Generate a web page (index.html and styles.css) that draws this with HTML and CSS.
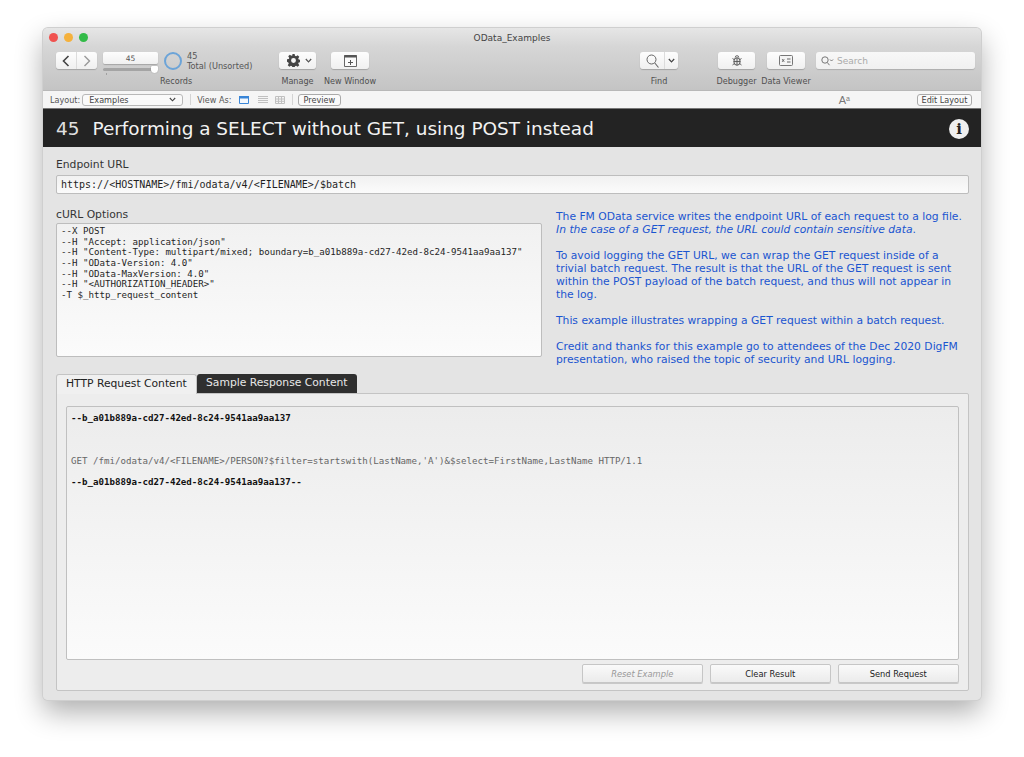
FILE: index.html
```
<!DOCTYPE html>
<html lang="en">
<head>
<meta charset="utf-8">
<title>OData_Examples</title>
<link rel="stylesheet" href="styles.css">
</head>
<body>
<div class="window">
  <header class="chrome">
    <div class="titlebar">
      <div class="lights"><i class="light red"></i><i class="light yellow"></i><i class="light green"></i></div>
      <div class="wintitle">OData_Examples</div>
    </div>
    <div class="toolbar">
      <div class="tool nav-tool">
        <div class="btn nav">
          <span class="seg"><svg width="8" height="12" viewBox="0 0 8 12"><path d="M6.500 1 1.500 6l5 5" fill="none" stroke="#444" stroke-width="1.600"/></svg></span>
          <span class="seg seg-off"><svg width="8" height="12" viewBox="0 0 8 12"><path d="M1.500 1l5 5-5 5" fill="none" stroke="#999" stroke-width="1.400"/></svg></span>
        </div>
      </div>
      <div class="tool records-tool">
        <div class="recfield">45</div>
        <div class="slider"><i class="thumb"></i><i class="tick"></i></div>
        <div class="tlabel reclabel">Records</div>
      </div>
      <div class="ring"></div>
      <div class="counts"><div>45</div><div>Total (Unsorted)</div></div>
      <div class="tool manage-tool">
        <div class="btn iconbtn gearbtn">
          <svg width="13" height="13" viewBox="0 0 16 16"><path fill="#444" fill-rule="evenodd" d="M6.600 0h2.800l.4 2.200 1.400.6 1.900-1.300 2 2-1.300 1.900.6 1.400 2.200.4v2.800l-2.200.4-.6 1.400 1.300 1.900-2 2-1.900-1.300-1.400.6-.4 2.200H6.600l-.4-2.200-1.400-.6-1.900 1.300-2-2 1.300-1.900-.6-1.400L0 9.400V6.600l2.200-.4.600-1.400L1.500 2.900l2-2 1.900 1.300 1.400-.6zM8 5a3 3 0 1 0 0 6 3 3 0 0 0 0-6z"/></svg>
          <svg width="7" height="5" viewBox="0 0 7 5"><path d="M.8 1 3.500 3.800 6.200 1" fill="none" stroke="#555" stroke-width="1.200"/></svg>
        </div>
        <div class="tlabel">Manage</div>
      </div>
      <div class="tool window-tool">
        <div class="btn iconbtn">
          <svg width="13" height="12" viewBox="0 0 13 12"><path d="M.5.5h12v11H.5z" fill="#fafafa" stroke="#666"/><path d="M.5 0h12v2.500H.5z" fill="#555"/><path d="M6.500 5v5M4 7.500h5" stroke="#555" fill="none"/></svg>
        </div>
        <div class="tlabel">New Window</div>
      </div>
      <div class="spring"></div>
      <div class="tool find-tool">
        <div class="btn nav">
          <span class="seg seg-find"><svg width="13" height="14" viewBox="0 0 13 14"><circle cx="5.500" cy="5.500" r="4.500" fill="none" stroke="#666"/><path d="M8.800 9 12.500 13.500" stroke="#666" stroke-width="1.100"/></svg></span>
          <span class="seg seg-drop"><svg width="7" height="5" viewBox="0 0 7 5"><path d="M.8 1 3.500 3.800 6.200 1" fill="none" stroke="#444" stroke-width="1.200"/></svg></span>
        </div>
        <div class="tlabel">Find</div>
      </div>
      <div class="tool debug-tool">
        <div class="btn iconbtn">
          <svg width="10" height="11" viewBox="0 0 10 11"><ellipse cx="5" cy="6.500" rx="3.200" ry="3.800" fill="#e4e4e4" stroke="#555"/><path d="M3.200 2.500a1.800 1.800 0 0 1 3.600 0M5 3v7M1.800 6.500h6.400M.5 3.500l1.500 1M9.500 3.500 8 4.500M.5 10 2 8.800M9.500 10 8 8.800" fill="none" stroke="#555" stroke-width=".9"/></svg>
        </div>
        <div class="tlabel">Debugger</div>
      </div>
      <div class="tool viewer-tool">
        <div class="btn iconbtn">
          <svg width="14" height="11" viewBox="0 0 14 11"><rect x=".5" y=".5" width="13" height="10" rx="1" fill="#f4f4f4" stroke="#777"/><path d="M3.200 4.200l2 2.600M5.200 4.200l-2 2.600M8 4h3.500M8 7h3.500" stroke="#666" fill="none"/></svg>
        </div>
        <div class="tlabel">Data Viewer</div>
      </div>
      <div class="search">
        <svg width="13" height="10" viewBox="0 0 13 10"><circle cx="4" cy="4" r="3.200" fill="none" stroke="#777"/><path d="M6.300 6.500 8.500 9.200" stroke="#777"/><path d="M9 3.500l1.500 1.500L12 3.500" stroke="#777" fill="none"/></svg>
        <span>Search</span>
      </div>
    </div>
  </header>

  <nav class="layoutbar">
    <span class="lb-label">Layout:</span>
    <span class="select">Examples<svg width="7" height="5" viewBox="0 0 7 5"><path d="M.8 1 3.500 3.800 6.200 1" fill="none" stroke="#444" stroke-width="1.100"/></svg></span>
    <i class="sep"></i>
    <span class="lb-label">View As:</span>
    <svg class="view view-form" width="10" height="8" viewBox="0 0 10 8"><path d="M.5.5h9v7h-9z" fill="#f4f8fd" stroke="#3a86d8"/><path d="M0 0h10v2.500H0z" fill="#3a86d8"/></svg>
    <svg class="view view-list" width="10" height="7" viewBox="0 0 10 7"><path d="M0 .5h10M0 2.500h10M0 4.500h10M0 6.500h10" stroke="#c0c0c0"/></svg>
    <svg class="view view-table" width="10" height="8" viewBox="0 0 10 8"><path d="M.5.5h9v7h-9zM.5 3h9M.5 5.300h9M3.500.5v7M6.500 .5v7" fill="none" stroke="#c0c0c0"/></svg>
    <i class="sep sep-right"></i>
    <span class="pill">Preview</span>
    <span class="spring"></span>
    <span class="aa">A<sup>a</sup></span>
    <span class="pill edit">Edit Layout</span>
  </nav>

  <div class="banner">
    <div class="banner-title"><span class="num">45</span>Performing a SELECT without GET, using POST instead</div>
    <div class="info">i</div>
  </div>

  <main class="content">
    <div class="flabel">Endpoint URL</div>
    <div class="field url">https://&lt;HOSTNAME&gt;/fmi/odata/v4/&lt;FILENAME&gt;/$batch</div>
    <div class="columns">
      <section class="curl">
        <div class="flabel">cURL Options</div>
        <pre class="field options">--X POST
--H "Accept: application/json"
--H "Content-Type: multipart/mixed; boundary=b_a01b889a-cd27-42ed-8c24-9541aa9aa137"
--H "OData-Version: 4.0"
--H "OData-MaxVersion: 4.0"
--H "&lt;AUTHORIZATION_HEADER&gt;"
-T $_http_request_content</pre>
      </section>
      <section class="notes">
        <p>The FM OData service writes the endpoint URL of each request to a log file.<br><em>In the case of a GET request, the URL could contain sensitive data</em>.</p>
        <p>To avoid logging the GET URL, we can wrap the GET request inside of a trivial batch request. The result is that the URL of the GET request is sent within the POST payload of the batch request, and thus will not appear in the log.</p>
        <p>This example illustrates wrapping a GET request within a batch request.</p>
        <p>Credit and thanks for this example go to attendees of the Dec 2020 DigFM presentation, who raised the topic of security and URL logging.</p>
      </section>
    </div>
    <div class="tabs">
      <div class="tab active">HTTP Request Content</div>
      <div class="tab dark">Sample Response Content</div>
    </div>
    <div class="panel">
      <div class="result">
        <div class="bold">--b_a01b889a-cd27-42ed-8c24-9541aa9aa137</div>
        <div class="get">GET /fmi/odata/v4/&lt;FILENAME&gt;/PERSON?$filter=startswith(LastName,'A')&amp;$select=FirstName,LastName HTTP/1.1</div>
        <div class="bold end">--b_a01b889a-cd27-42ed-8c24-9541aa9aa137--</div>
      </div>
      <div class="actions">
        <button class="action disabled">Reset Example</button>
        <button class="action">Clear Result</button>
        <button class="action">Send Request</button>
      </div>
    </div>
  </main>
</div>
</body>
</html>
```

FILE: styles.css
```
* { box-sizing: border-box; }
html, body { margin: 0; height: 757px; background: #fff; overflow: hidden; }
body { padding: 28px 43px 57px; font-family: "DejaVu Sans", sans-serif; color: #333; }

.window {
  width: 938px; height: 672px;
  display: flex; flex-direction: column;
  border-radius: 5px; overflow: hidden;
  background: #e4e4e4;
  box-shadow: 0 0 0 1px #cfcfcf, 0 12px 28px rgba(0,0,0,.32);
}

.chrome { height: 63px; flex: none; background: linear-gradient(#e6e6e6, #d6d6d6 30%, #c4c4c4); border-bottom: 1px solid #b8b8b8; }
.titlebar { height: 24px; display: flex; align-items: center; position: relative; }
.lights { display: flex; gap: 6.300px; padding-left: 5.500px; margin-top: -5px; }
.light { width: 9px; height: 9px; border-radius: 50%; }
.red { background: #f0524f; }
.yellow { background: #f5b13c; }
.green { background: #33bb48; }
.wintitle { position: absolute; left: 0; right: 0; top: 5px; text-align: center; font-size: 9px; line-height: 11px; color: #444; }

.toolbar { display: flex; align-items: flex-start; padding-left: 13px; height: 38px; }
.tool { display: flex; flex-direction: column; align-items: center; }
.tlabel { font-size: 8.100px; line-height: 10px; color: #4f4f4f; margin-top: 7px; white-space: nowrap; }
.btn { height: 17px; background: linear-gradient(#fdfdfd, #f0f0f0); border-radius: 3px; box-shadow: 0 1px 1px rgba(0,0,0,.2); display: flex; align-items: center; }
.nav { width: 100%; }
.seg { flex: 1; height: 100%; display: flex; align-items: center; justify-content: center; }
.seg + .seg { border-left: 1px solid #dcdcdc; }
.iconbtn { width: 100%; justify-content: center; }
.gearbtn { gap: 5px; padding-left: 3px; }
.spring { flex: 1; }

.nav-tool { width: 41px; margin-right: 6px; }
.records-tool { width: 55px; align-items: stretch; }
.recfield { height: 12px; background: linear-gradient(#fdfdfd, #f0f0f0); border-radius: 2px; box-shadow: 0 1px 1px rgba(0,0,0,.2); text-align: center; font-size: 7.500px; line-height: 13px; color: #555; }
.slider { height: 3px; margin-top: 4px; background: #a4a4a4; border-radius: 2px; position: relative; }
.thumb { position: absolute; right: 0; top: -2px; width: 7px; height: 7px; background: #fff; border-radius: 1px 1px 4px 4px; box-shadow: 0 0 1px #777; }
.tick { position: absolute; left: 3px; top: 5px; width: 1px; height: 2px; background: #a0a0a0; }
.reclabel { text-align: center; margin-top: 5px; width: 100%; padding-left: 57px; }
.ring { width: 18px; height: 18px; margin: 0 5px 0 6px; border: 2.500px solid #6ca4d8; border-radius: 50%; }
.counts { width: 92px; font-size: 8.200px; line-height: 10px; color: #555; margin-top: -1px; }
.manage-tool { width: 37px; margin-right: 15px; }
.window-tool { width: 38px; }
.find-tool { width: 38px; margin-right: 40px; }
.seg-find { flex: 0 0 24px; }
.seg-drop { flex: 1; }
.debug-tool { width: 37px; margin-right: 12px; }
.viewer-tool { width: 38px; margin-right: 11px; }
.search { width: 159px; margin-right: 6px; height: 17px; display: flex; align-items: center; gap: 3px; padding-left: 5px; background: linear-gradient(#f8f8f8, #f0f0f0); border-radius: 3px; box-shadow: 0 1px 1px rgba(0,0,0,.15); font-size: 9px; color: #aaa; }

.layoutbar { height: 18px; flex: none; background: #f5f5f5; display: flex; align-items: center; padding: 0 9px 0 7px; font-size: 8.100px; color: #444; border-bottom: 1px solid #777; }
.lb-label { color: #555; }
.select { width: 101px; height: 12px; margin-left: 2px; padding: 0 6px; border: 1px solid #b8b8b8; border-radius: 3px; background: #fafafa; display: flex; align-items: center; justify-content: space-between; line-height: 10px; }
.sep { width: 1px; height: 11px; background: #d4d4d4; margin: 0 6px 0 7px; }
.sep-right { margin: 0 5px 0 7px; }
.view-form { margin-left: 7px; }
.view-list { margin-left: 9px; }
.view-table { margin-left: 7px; }
.pill { height: 12px; padding: 0 5px; border: 1px solid #aaa; border-radius: 3px; background: #fafafa; line-height: 10px; }
.aa { font-size: 11px; color: #777; margin-right: 67px; line-height: 12px; font-family: "Liberation Sans", sans-serif; }
.aa sup { font-size: 7px; vertical-align: 3px; line-height: 0; }
.edit { width: 55px; padding: 0; text-align: center; }

.banner { height: 38px; background: #232323; color: #f2f2f2; display: flex; align-items: center; justify-content: space-between; padding: 1px 12px 0 13px; flex: none; }
.banner-title { font-size: 18.440px; line-height: 22px; white-space: nowrap; }
.num { margin-right: 13px; color: #e0e0e0; }
.info { width: 20px; height: 20px; border-radius: 50%; background: #efefef; color: #232323; text-align: center; font: bold 15px/20px "DejaVu Serif", serif; }

.content { flex: 1; padding: 11px 12px 9px 13px; display: flex; flex-direction: column; background: #e4e4e4; min-height: 0; }
.flabel { font-size: 10.750px; line-height: 14px; color: #333; }
.field { background: linear-gradient(#f1f1f1, #fbfbfb); border: 1px solid #bdbdbd; border-radius: 2px; font-family: "DejaVu Sans Mono", monospace; color: #1f1f1f; }
.url { height: 19px; margin-top: 3px; font-size: 10px; line-height: 17px; padding-left: 4px; width: 913px; }
.columns { display: flex; margin-top: 13px; height: 159px; }
.curl { width: 486px; padding-top: 1px; }
.options { margin: 1px 0 0; height: 134px; padding: 2px 4px; font-size: 9.140px; line-height: 10.670px; white-space: pre; overflow: hidden; }
.notes { margin-left: 14px; width: 410px; color: #1a55d0; font-size: 10.750px; line-height: 13px; padding-top: 3px; }
.notes p { margin: 0 0 13px; }

.tabs { display: flex; height: 19px; margin-top: 8px; }
.tab { font-size: 10.750px; line-height: 18px; padding: 0 9px; border-radius: 3px 3px 0 0; white-space: nowrap; }
.active { width: 141px; background: #f0f0f0; border: 1px solid #c4c4c4; border-bottom: 0; position: relative; z-index: 1; height: 20px; color: #222; }
.dark { width: 160px; background: #2f2f2f; color: #e8e8e8; }
.panel { flex: 1; display: flex; flex-direction: column; background: #ededed; border: 1px solid #c4c4c4; border-radius: 0 2px 2px 2px; padding: 12px 9px 7px; min-height: 0; width: 913px; }
.result { flex: 1; background: linear-gradient(#ececec, #fbfbfb); border: 1px solid #c0c0c0; border-radius: 2px; padding: 6px 4px 4px; font-family: "DejaVu Sans Mono", monospace; font-size: 9.140px; line-height: 11px; color: #666; }
.bold { font-weight: bold; color: #111; }
.get { margin-top: 32px; }
.end { margin-top: 10px; }
.actions { display: flex; justify-content: flex-end; gap: 6.500px; margin-top: 4px; }
.action { width: 121.500px; height: 19px; padding: 0; background: linear-gradient(#fafafa, #ebebeb); border: 1px solid #c6c6c6; border-radius: 2px; box-shadow: 0 1px 0 #c8c8c8; font-family: "DejaVu Sans", sans-serif; font-size: 8.300px; color: #222; }
.disabled { color: #999; font-style: italic; }
```
